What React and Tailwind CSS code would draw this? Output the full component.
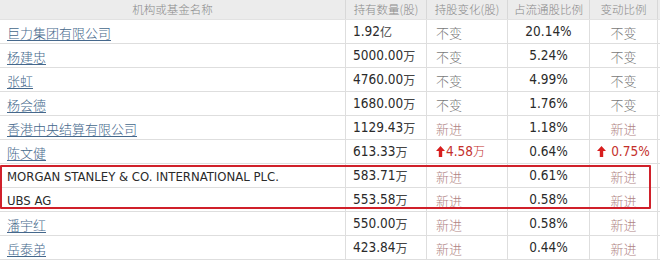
import React from 'react';

const rows = [
  { name: '巨力集团有限公司', link: true, num: '1.92', unit: '亿', change: '不变', ratio: '20.14%', delta: '不变' },
  { name: '杨建忠', link: true, num: '5000.00', unit: '万', change: '不变', ratio: '5.24%', delta: '不变' },
  { name: '张虹', link: true, num: '4760.00', unit: '万', change: '不变', ratio: '4.99%', delta: '不变' },
  { name: '杨会德', link: true, num: '1680.00', unit: '万', change: '不变', ratio: '1.76%', delta: '不变' },
  { name: '香港中央结算有限公司', link: true, num: '1129.43', unit: '万', change: '新进', ratio: '1.18%', delta: '新进' },
  { name: '陈文健', link: true, num: '613.33', unit: '万', change: 'up:4.58', ratio: '0.64%', delta: 'up:0.75%' },
  { name: 'MORGAN STANLEY & CO. INTERNATIONAL PLC.', link: false, num: '583.71', unit: '万', change: '新进', ratio: '0.61%', delta: '新进' },
  { name: 'UBS AG', link: false, num: '553.58', unit: '万', change: '新进', ratio: '0.58%', delta: '新进' },
  { name: '潘宇红', link: true, num: '550.00', unit: '万', change: '新进', ratio: '0.58%', delta: '新进' },
  { name: '岳泰弟', link: true, num: '423.84', unit: '万', change: '新进', ratio: '0.44%', delta: '新进' },
];

const cjk = "font-['Noto_Sans_CJK_SC',sans-serif]";
const latin = "font-['Liberation_Sans_Narrow','DejaVu_Sans_Condensed','Noto_Sans_CJK_SC',sans-serif]";

// column widths: 346 / 81 / 81 / 82 / 68
const cols = ['w-[346px]', 'w-[81px]', 'w-[81px]', 'w-[82px]', 'w-[68px]'];

const UpArrow = () => (
  <svg width="9" height="11" viewBox="0 0 9 11" className="inline-block mr-[1px] -mt-[2px] align-middle">
    <path d="M4.5 0 L9 5 L6.2 5 L6.2 11 L2.8 11 L2.8 5 L0 5 Z" fill="#d81e1e" />
  </svg>
);

const Status = ({ value, center }) => {
  if (value.startsWith('up:')) {
    const v = value.slice(3);
    return (
      <span className={`text-[#c4302b] ${latin} text-[13.5px]`}>
        <UpArrow />
        {center ? ' ' : ''}
        {v}
        {!center && <span className={`${cjk} text-[12px] font-light`}>万</span>}
      </span>
    );
  }
  const color = value === '新进' ? 'text-[#b08484]' : 'text-[#7a7a7a]';
  return <span className={`${cjk} text-[13px] font-light ${color}`}>{value}</span>;
};

const App = () => {
  return (
    <div className="relative w-[660px] h-[263px] bg-white overflow-hidden">
      <div className="flex h-[20px] bg-[#ececec] border-b border-[#e2e2e2] box-border">
        {['机构或基金名称', '持有数量(股)', '持股变化(股)', '占流通股比例', '变动比例'].map((h, i) => (
          <div
            key={h}
            className={`${cols[i]} shrink-0 flex items-center justify-center border-r border-[#d8d8d8] font-light text-[11.5px] leading-none text-[#8a8a8a] ${cjk}`}
          >
            {h}
          </div>
        ))}
      </div>
      {rows.map((r) => (
        <div key={r.name} className="flex h-[24px] border-b border-[#dedede] box-border">
          <div className={`${cols[0]} shrink-0 flex items-center pl-[7px] pt-[1px] border-r border-[#dedede] whitespace-nowrap leading-none`}>
            {r.link ? (
              <span className={`${cjk} text-[13px] font-light text-[#45688c] underline underline-offset-2 decoration-[#45688c]`}>
                {r.name}
              </span>
            ) : (
              <span className={`${latin} text-[13px] text-[#2a2a2a]`}>{r.name}</span>
            )}
          </div>
          <div className={`${cols[1]} shrink-0 flex items-center pl-[7px] pt-[1px] border-r border-[#dedede] whitespace-nowrap leading-none`}>
            <span className={`${latin} text-[13.5px] text-[#2a2a2a]`}>{r.num}</span>
            <span className={`${cjk} text-[12px] text-[#444]`}>{r.unit}</span>
          </div>
          <div className={`${cols[2]} shrink-0 flex items-center pl-[9px] pt-[1px] border-r border-[#dedede] whitespace-nowrap leading-none`}>
            <Status value={r.change} />
          </div>
          <div className={`${cols[3]} shrink-0 flex items-center justify-center pt-[1px] border-r border-[#dedede] leading-none ${latin} text-[13.5px] text-[#2a2a2a]`}>
            {r.ratio}
          </div>
          <div className={`${cols[4]} shrink-0 flex items-center justify-center pt-[1px] border-r border-[#dedede] whitespace-nowrap leading-none`}>
            <Status value={r.delta} center />
          </div>
        </div>
      ))}
      {/* highlight box drawn over the two foreign holders */}
      <div className="absolute left-0 top-[165px] w-[651px] h-[44px] border-2 border-[#d0202a] rounded-[1px] pointer-events-none" />
    </div>
  );
};

export default App;
